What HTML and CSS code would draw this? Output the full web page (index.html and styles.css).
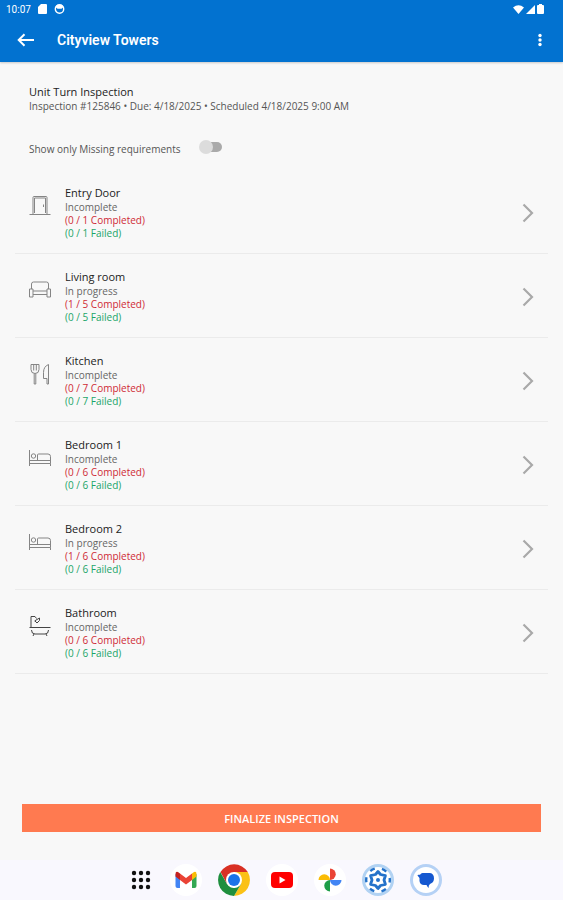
FILE: index.html
```html
<!DOCTYPE html>
<html lang="en">
<head>
  <meta charset="UTF-8" />
  <meta name="viewport" content="width=device-width, initial-scale=1.0" />
  <title>Cityview Towers</title>
  <link rel="stylesheet" href="styles.css">
</head>
<body>
  <!-- Shared icons -->
  <svg class="sprite" aria-hidden="true">
    <symbol id="chevron" viewBox="0 0 12 20">
      <path d="M1.500 1.500 10 10l-8.500 8.500" fill="none" stroke="#a9a9a9" stroke-width="2.200" />
    </symbol>
    <symbol id="bed" viewBox="0 0 24 24">
      <path d="M1.500 4v16M1.500 17.500h21V20M1.500 14.500h21M22.500 17.500v-7a2.500 2.500 0 0 0-2.500-2.500H10.500q-1 0-1 1v5.500" />
      <circle cx="5.500" cy="10" r="2.200" />
    </symbol>
  </svg>

  <header class="header">
    <div class="status-bar">
      <span>10:07</span>
      <svg width="9" height="10" viewBox="0 0 9 10"><path d="M3 0h5q1 0 1 1v8q0 1-1 1H1q-1 0-1-1V3z" fill="#fff" /></svg>
      <svg width="11" height="10" viewBox="0 0 11 10">
        <circle cx="5.500" cy="5" r="4.200" fill="none" stroke="#fff" stroke-width="1.400" />
        <path d="M1.500 3 3.500 4.800h4l2-1.800L8 1H3z" fill="#fff" />
      </svg>
      <span class="status-icons">
        <svg width="11" height="9" viewBox="0 0 11 9"><path d="M0 2.500Q5.500-2 11 2.500L5.500 9z" fill="#fff" /></svg>
        <svg width="9" height="9" viewBox="0 0 9 9"><path d="M9 0v9H0z" fill="#fff" /></svg>
        <svg width="7" height="10" viewBox="0 0 7 10"><path d="M2 0h3v1h1q1 0 1 1v7q0 1-1 1H1q-1 0-1-1V2q0-1 1-1h1z" fill="#fff" /></svg>
      </span>
    </div>
    <div class="app-bar">
      <button class="icon-btn" aria-label="Back">
        <svg width="18" height="14" viewBox="0 0 18 14"><path d="M17 7H2M7.500 1.200 1.700 7l5.800 5.800" fill="none" stroke="#fff" stroke-width="2" /></svg>
      </button>
      <h1>Cityview Towers</h1>
      <button class="icon-btn menu-btn" aria-label="More options">
        <svg width="4" height="14" viewBox="0 0 4 14" fill="#fff"><circle cx="2" cy="2.500" r="1.700" /><circle cx="2" cy="7" r="1.700" /><circle cx="2" cy="11.500" r="1.700" /></svg>
      </button>
    </div>
  </header>

  <main class="content">
    <div class="summary">
      <h2>Unit Turn Inspection</h2>
      <p>Inspection #125846 • Due: 4/18/2025 • Scheduled 4/18/2025 9:00 AM</p>
    </div>

    <div class="filter">
      <label for="missingOnly">Show only Missing requirements</label>
      <input type="checkbox" id="missingOnly" class="switch" />
    </div>

    <!-- Areas to inspect -->
    <nav class="areas">
      <a class="area" href="#entry-door">
        <svg class="area-icon" viewBox="0 0 24 24"><path d="M5 20V3.500q0-1 1-1h12q1 0 1 1V20M1.500 20.500h21M6.500 19V4h11v15M15.500 10.500v2.500" /></svg>
        <div class="area-text">
          <h3>Entry Door</h3>
          <p>Incomplete</p>
          <p class="completed">(0 / 1 Completed)</p>
          <p class="failed">(0 / 1 Failed)</p>
        </div>
        <svg class="chevron"><use href="#chevron" /></svg>
      </a>
      <a class="area" href="#living-room">
        <svg class="area-icon" viewBox="0 0 24 24"><path d="M3.500 11V6q0-2 2-2h13q2 0 2 2v5M5 13h14M5 16.500h14M1.500 11h3.500v8H1.500zM19 11h3.500v8H19z" /></svg>
        <div class="area-text">
          <h3>Living room</h3>
          <p>In progress</p>
          <p class="completed">(1 / 5 Completed)</p>
          <p class="failed">(0 / 5 Failed)</p>
        </div>
        <svg class="chevron"><use href="#chevron" /></svg>
      </a>
      <a class="area" href="#kitchen">
        <svg class="area-icon" viewBox="0 0 24 24"><path d="M3 2.500v5q0 4 4 4t4-4v-5M5.700 2.500v6M8.300 2.500v6M3 2.500h8M6.200 11.500V22h1.600V11.500M20.500 22V2.500q-5 2-5 8v6h3.500V22z" /></svg>
        <div class="area-text">
          <h3>Kitchen</h3>
          <p>Incomplete</p>
          <p class="completed">(0 / 7 Completed)</p>
          <p class="failed">(0 / 7 Failed)</p>
        </div>
        <svg class="chevron"><use href="#chevron" /></svg>
      </a>
      <a class="area" href="#bedroom-1">
        <svg class="area-icon"><use href="#bed" /></svg>
        <div class="area-text">
          <h3>Bedroom 1</h3>
          <p>Incomplete</p>
          <p class="completed">(0 / 6 Completed)</p>
          <p class="failed">(0 / 6 Failed)</p>
        </div>
        <svg class="chevron"><use href="#chevron" /></svg>
      </a>
      <a class="area" href="#bedroom-2">
        <svg class="area-icon"><use href="#bed" /></svg>
        <div class="area-text">
          <h3>Bedroom 2</h3>
          <p>In progress</p>
          <p class="completed">(1 / 6 Completed)</p>
          <p class="failed">(0 / 6 Failed)</p>
        </div>
        <svg class="chevron"><use href="#chevron" /></svg>
      </a>
      <a class="area" href="#bathroom">
        <svg class="area-icon dark" viewBox="0 0 24 24"><path d="M3 13.500V2.500h4l1.500 2M6.500 7l5-3M7 7l2 2 2.500-2.500V4M1.500 13.500h21M3.500 16q0 4 3.500 4h10q3.500 0 3.500-4M6 20l-1 2M18 20l1 2" /></svg>
        <div class="area-text">
          <h3>Bathroom</h3>
          <p>Incomplete</p>
          <p class="completed">(0 / 6 Completed)</p>
          <p class="failed">(0 / 6 Failed)</p>
        </div>
        <svg class="chevron"><use href="#chevron" /></svg>
      </a>
    </nav>

    <button class="finalize">FINALIZE INSPECTION</button>
  </main>

  <!-- Tablet dock -->
  <footer class="dock">
    <button class="dock-btn apps" aria-label="All apps">
      <svg width="20" height="20" viewBox="0 0 20 20">
        <g fill="#111"><circle cx="3" cy="3" r="2.200" /><circle cx="10" cy="3" r="2.200" /><circle cx="17" cy="3" r="2.200" /><circle cx="3" cy="10" r="2.200" /><circle cx="10" cy="10" r="2.200" /><circle cx="17" cy="10" r="2.200" /><circle cx="3" cy="17" r="2.200" /><circle cx="10" cy="17" r="2.200" /><circle cx="17" cy="17" r="2.200" /></g>
      </svg>
    </button>
    <button class="dock-btn" aria-label="Gmail">
      <svg width="32" height="32" viewBox="0 0 32 32">
        <circle cx="16" cy="16" r="16" fill="#fff" />
        <path d="M5.500 10v12q0 2 2 2H10V13z" fill="#4285f4" />
        <path d="M26.500 10v12q0 2-2 2H22V13z" fill="#34a853" />
        <path d="M22 9.500 24 8q2.500-1 2.500 2v2.500L22 16z" fill="#fbbc04" />
        <path d="M10 9.500 8 8q-2.500-1-2.500 2v2.500L10 16z" fill="#c5221f" />
        <path d="M10 9.500 16 14l6-4.500V16l-6 4.500L10 16z" fill="#ea4335" />
      </svg>
    </button>
    <button class="dock-btn" aria-label="Chrome">
      <svg width="32" height="32" viewBox="0 0 32 32">
        <path d="M2.500 8A16 16 0 0 1 29.800 8L16 8 9 20z" fill="#d93025" />
        <path d="M29.800 8A16 16 0 0 1 16 32L23 20 23 12 16 8z" fill="#fbc116" />
        <path d="M16 32A16 16 0 0 1 2.200 8L9 20 16 24 23 20z" fill="#1e8e3e" />
        <circle cx="16" cy="16" r="8" fill="#fff" />
        <circle cx="16" cy="16" r="6" fill="#1a73e8" />
      </svg>
    </button>
    <button class="dock-btn" aria-label="YouTube">
      <svg width="32" height="32" viewBox="0 0 32 32">
        <circle cx="16" cy="16" r="16" fill="#fff" />
        <rect x="5" y="8" width="22" height="16" rx="4" fill="#f00" />
        <path d="M13.500 12.500v7l6-3.500z" fill="#fff" />
      </svg>
    </button>
    <button class="dock-btn" aria-label="Photos">
      <svg width="32" height="32" viewBox="0 0 32 32">
        <circle cx="16" cy="16" r="16" fill="#fff" />
        <path d="M16 4.500a5.750 5.750 0 0 1 0 11.500z" fill="#ea4335" />
        <path d="M27.500 16a5.750 5.750 0 0 1-11.500 0z" fill="#4285f4" />
        <path d="M16 27.500a5.750 5.750 0 0 1 0-11.500z" fill="#1e9e48" />
        <path d="M4.500 16a5.750 5.750 0 0 1 11.500 0z" fill="#fbbc04" />
      </svg>
    </button>
    <button class="dock-btn" aria-label="Settings">
      <svg width="32" height="32" viewBox="0 0 32 32">
        <circle cx="16" cy="16" r="16" fill="#b1d2f3" />
        <circle cx="16" cy="16" r="13" fill="#fff" />
        <circle cx="16" cy="16" r="11.800" fill="none" stroke="#2472ca" stroke-width="2.400" stroke-dasharray="5 7.357" stroke-dashoffset="2.500" />
        <path d="M16 7.500 18.500 10.500 23.400 11.700 22 16 23.400 20.300 18.500 21.500 16 24.500 13.500 21.500 8.600 20.300 10 16 8.600 11.700 13.500 10.500z" fill="none" stroke="#2472ca" stroke-width="2.800" stroke-linejoin="round" />
        <circle cx="16" cy="16" r="2" fill="#2472ca" />
      </svg>
    </button>
    <button class="dock-btn" aria-label="Messages">
      <svg width="32" height="32" viewBox="0 0 32 32">
        <circle cx="16" cy="16" r="16" fill="#b5d1f5" />
        <circle cx="16" cy="16" r="13" fill="#fff" />
        <path d="M12.500 9H20q4 .5 4 5.500 0 4-4 5.500-1.500 1-1.500 4-1-1-2-3H14q-4 0-4.500-4V14L7.500 11.500q0-.7 1-.7H10Q11 9 12.500 9z" fill="#1558d0" />
      </svg>
    </button>
  </footer>
</body>
</html>
```

FILE: styles.css
```css
* {
  box-sizing: border-box;
}
body {
  margin: 0;
  min-height: 100vh;
  display: flex;
  flex-direction: column;
  background-color: #f8f8f8;
  font-family: "Open Sans", sans-serif;
  color: #222;
}
h1, h2, h3, p {
  margin: 0;
}
svg {
  display: block;
}
button {
  padding: 0;
  border: none;
  background: none;
  cursor: pointer;
}
.sprite {
  position: absolute;
  width: 0;
  height: 0;
}

/* Header */
.header {
  background-color: #0272d0;
  color: white;
  font-family: Roboto, sans-serif;
  box-shadow: 0 1px 2px rgba(0, 0, 0, 0.2);
}
.status-bar {
  display: flex;
  align-items: center;
  gap: 7px;
  height: 18px;
  padding: 0 19px 0 6px;
  font-size: 10px;
}
.status-icons {
  display: flex;
  align-items: center;
  gap: 2px;
  margin-left: auto;
}
.app-bar {
  display: flex;
  align-items: center;
  height: 44px;
  padding: 0 15px 0 17px;
}
.app-bar h1 {
  margin-left: 22px;
  font-size: 14px;
  font-weight: 600;
}
.icon-btn {
  display: flex;
}
.menu-btn {
  margin-left: auto;
  padding: 0 6px;
}

/* Inspection */
.content {
  flex: 1;
  display: flex;
  flex-direction: column;
}
.summary {
  padding: 22px 29px 0;
}
.summary h2 {
  font-size: 11px;
  line-height: 16px;
  font-weight: 500;
}
.summary p {
  font-size: 10px;
  line-height: 13px;
  color: #555;
}
.filter {
  display: flex;
  align-items: flex-start;
  gap: 18px;
  padding: 26px 29px 11px;
  font-size: 10px;
  line-height: 20px;
  color: #555;
}
.switch {
  appearance: none;
  display: flex;
  align-items: center;
  position: relative;
  width: 24px;
  height: 14px;
  margin: 1px 0 0;
  cursor: pointer;
}
.switch::before {
  content: "";
  position: absolute;
  inset: 2px 1px 2px 4px;
  border-radius: 5px;
  background-color: #aaa;
}
.switch::after {
  content: "";
  position: relative;
  width: 14px;
  height: 14px;
  border-radius: 50%;
  background-color: #dcdcdc;
}
.switch:checked::after {
  margin-left: auto;
  background-color: #0272d0;
}
.areas {
  margin: 0 15px;
}
.area {
  display: flex;
  padding: 15px 14px 13px 13px;
  border-bottom: 1px solid #ebebeb;
  color: #222;
  text-decoration: none;
}
.area-icon {
  width: 24px;
  height: 24px;
  margin: 9px 13px 0 0;
  fill: none;
  stroke: #858585;
  stroke-width: 1;
}
.area-icon.dark {
  stroke: #444;
}
.area-text {
  flex: 1;
  font-size: 10px;
  line-height: 13px;
  color: #666;
}
.area-text h3 {
  font-size: 11px;
  line-height: 16px;
  font-weight: 500;
  color: #222;
}
.area-text .completed {
  color: #cf2a35;
}
.area-text .failed {
  color: #1ba568;
}
.chevron {
  align-self: center;
  width: 12px;
  height: 20px;
}
.finalize {
  height: 28px;
  margin: auto 22px 28px;
  background-color: #ff7a50;
  color: white;
  font-family: "Open Sans", sans-serif;
  font-size: 11px;
  font-weight: 600;
}

/* Dock */
.dock {
  display: flex;
  justify-content: center;
  align-items: center;
  gap: 16px;
  height: 40px;
  padding-left: 7px;
  background-color: #f9f8fe;
}
.dock-btn {
  display: flex;
  justify-content: center;
  width: 32px;
}
.dock-btn.apps {
  width: 26px;
}
```
